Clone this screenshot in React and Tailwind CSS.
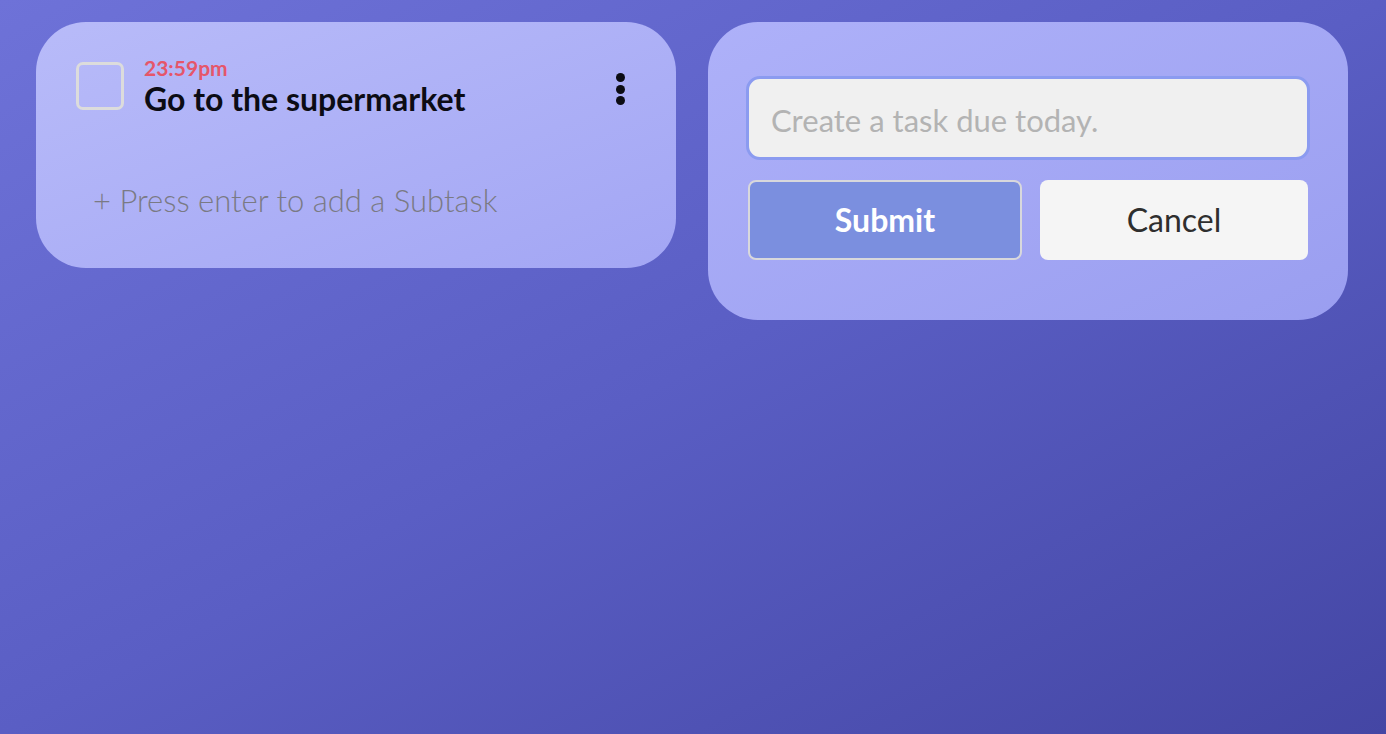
export default function App() {
  return (
    <div
      className="w-[1386px] h-[734px] overflow-hidden bg-gradient-to-br from-[#6e72d8] via-[#5a5ec4] to-[#4446a4]"
      style={{ fontFamily: "Lato, 'Noto Sans', sans-serif" }}
    >
      <div className="flex items-start gap-8 pl-9 pt-[22px]">
        {/* Left card */}
        <div className="w-[640px] h-[246px] rounded-[50px] bg-gradient-to-br from-[#b8bbf9] to-[#a3a6f4] px-10 pt-10">
          <div className="flex items-start">
            <div className="w-12 h-12 shrink-0 rounded-[7px] border-[3px] border-[#dcdcdc]" />
            <div className="ml-5 flex-1 flex flex-col -mt-[6px]">
              <span className="text-[21px] font-bold leading-[24px] text-[#e5566a]">23:59pm</span>
              <span className="text-[32px] font-bold leading-[36px] text-[#0c0c14] mt-[1px]">Go to the supermarket</span>
            </div>
            <div className="mt-[11px] mr-[11px] flex flex-col items-center gap-[2.5px]">
              <span className="block w-[9px] h-[9px] rounded-full bg-[#0c0c14]" />
              <span className="block w-[9px] h-[9px] rounded-full bg-[#0c0c14]" />
              <span className="block w-[9px] h-[9px] rounded-full bg-[#0c0c14]" />
            </div>
          </div>
          <div className="mt-[64px] pl-[17px] text-[31px] font-light leading-[38px] text-[#7a7a84]">
            + Press enter to add a Subtask
          </div>
        </div>

        {/* Right card */}
        <div className="w-[640px] h-[298px] rounded-[50px] bg-gradient-to-br from-[#aeb1f9] to-[#9a9ef0] px-[38px] pt-[54px]">
          <div className="h-[84px] rounded-[14px] border-[3px] border-[#8b9bf0] bg-[#f0f0f0] flex items-center px-[22px]">
            <span className="text-[31px] leading-none text-[#b3b3b3] mt-[4px]">Create a task due today.</span>
          </div>
          <div className="mt-5 flex gap-[18px] px-[2px]">
            <button className="w-[274px] h-20 rounded-lg border-2 border-[#d8d8dc] bg-[#7b8fdf] text-white text-[32px] font-bold">
              Submit
            </button>
            <button className="w-[268px] h-20 rounded-lg bg-[#f5f5f5] text-[#2e2e2e] text-[32px]">
              Cancel
            </button>
          </div>
        </div>
      </div>
    </div>
  );
}
